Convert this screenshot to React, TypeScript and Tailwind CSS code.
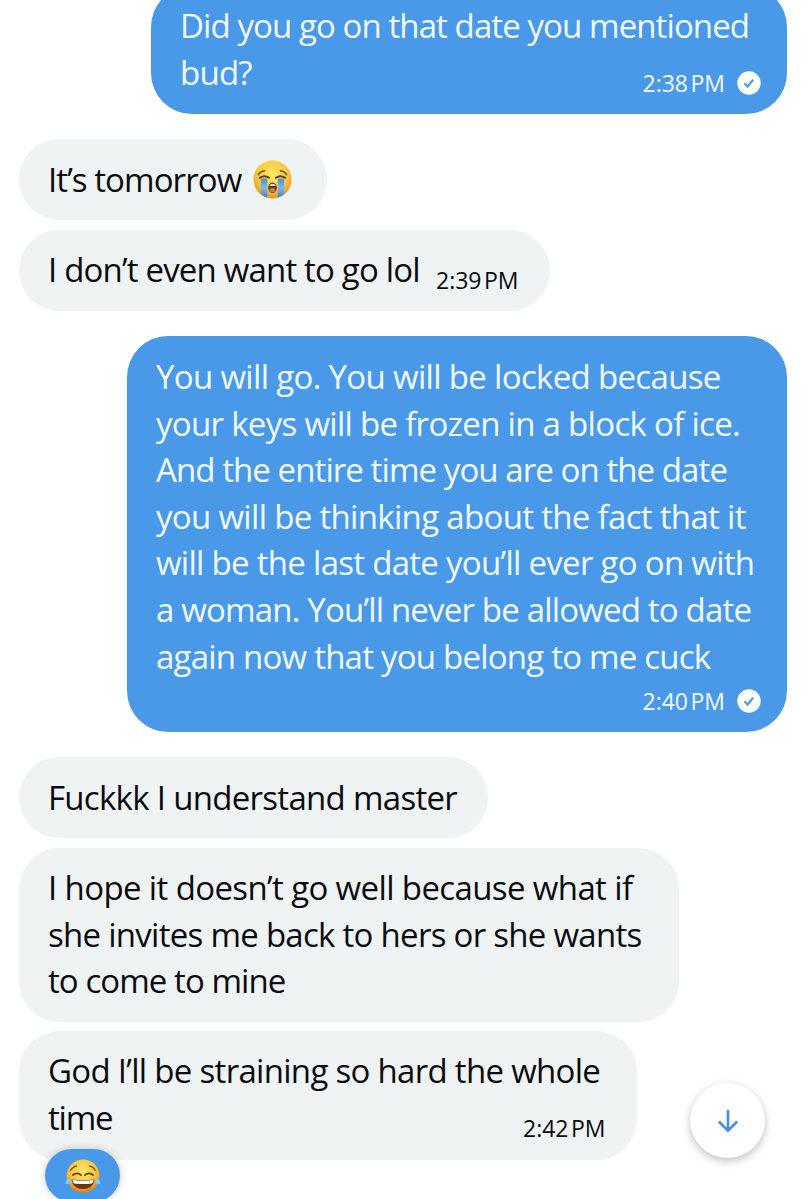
import clsx from "clsx";
import type { ReactNode } from "react";

type Line = { text: string; tracking?: string; after?: ReactNode };

function CryingEmoji() {
  return (
    <svg viewBox="0 0 40 40" className="h-[39px] w-[39px]">
      <defs>
        <radialGradient id="cry-face" cx="50%" cy="38%" r="65%">
          <stop offset="0" stopColor="#ffe96b" />
          <stop offset="0.6" stopColor="#fccb3c" />
          <stop offset="1" stopColor="#e08a1e" />
        </radialGradient>
        <linearGradient id="cry-tear" x1="0" y1="0" x2="0" y2="1">
          <stop offset="0" stopColor="#4f92d8" />
          <stop offset="0.5" stopColor="#7db8ea" />
          <stop offset="1" stopColor="#3a7fcc" />
        </linearGradient>
      </defs>
      <circle cx="20" cy="20" r="19.5" fill="url(#cry-face)" />
      <path d="M8 19h6.600v19.600q-3.800-1.200-6.600-3.800zM25.400 19h6.600v15.800q-2.800 2.600-6.600 3.800z" fill="url(#cry-tear)" />
      <path d="M5.500 15q2.500-3.500 6.500-4M34.500 15q-2.500-3.500-6.500-4" fill="none" stroke="#7b4a12" strokeWidth="1.500" strokeLinecap="round" />
      <path d="M7 18.200q5-3 9.500 0M23.500 18.200q4.500-3 9.500 0" fill="none" stroke="#5c3a12" strokeWidth="2" strokeLinecap="round" />
      <ellipse cx="20" cy="28.500" rx="4.500" ry="5.300" fill="#6b3a12" />
      <path d="M16.500 26.500q3.500-4.500 7 0z" fill="#fff" />
      <ellipse cx="20" cy="31" rx="3" ry="2.200" fill="#b98450" />
    </svg>
  );
}

function JoyEmoji() {
  return (
    <svg viewBox="0 0 36 34" className="h-[34px] w-[36px]">
      <defs>
        <radialGradient id="joy-face" cx="50%" cy="35%" r="65%">
          <stop offset="0" stopColor="#ffe96b" />
          <stop offset="0.6" stopColor="#fcc63a" />
          <stop offset="1" stopColor="#e0801a" />
        </radialGradient>
      </defs>
      <circle cx="18" cy="17" r="16.500" fill="url(#joy-face)" />
      <path d="M5.500 11.500q2.500-4 6-4.500M30.500 11.500q-2.500-4-6-4.500" fill="none" stroke="#8a5514" strokeWidth="1.300" strokeLinecap="round" />
      <path d="M8 16q4-3.200 8 0M20 16q4-3.200 8 0" fill="none" stroke="#5c3a12" strokeWidth="1.800" strokeLinecap="round" />
      <path d="M6.500 20.500q11.500 1.500 23 0q-1.500 9.500-11.500 9.500t-11.500-9.500z" fill="#6b3410" />
      <path d="M7.500 21q10.500 1.400 21 0q-.4 2.600-1.600 3.500q-8.900 1.200-17.800 0q-1.200-.9-1.600-3.500z" fill="#fff" />
      <path d="M5.800 18.500c1 4-1.200 6.800-3.600 6.600c-3-.3-2.200-3.600 3.600-6.600zM30.200 18.500c-1 4 1.200 6.800 3.600 6.600c3-.3 2.200-3.600-3.600-6.600z" fill="#7ecbf5" />
    </svg>
  );
}

function SentCheck() {
  return (
    <svg viewBox="0 0 24 24" className="h-6 w-6">
      <circle cx="12" cy="12" r="11.700" fill="#fff" />
      <path d="M7.400 12.300l3.200 3.200 5.600-6.900" fill="none" stroke="#4a99e9" strokeWidth="2.200" />
    </svg>
  );
}

function Time({ value, className }: { value: string; className?: string }) {
  return (
    <span className={clsx("text-[23px] leading-6 tracking-[-0.05px] whitespace-nowrap [word-spacing:-3.2px]", className)}>
      {value}
    </span>
  );
}

function Bubble({
  lines,
  sent,
  className,
  children,
}: {
  lines: Line[];
  sent?: boolean;
  className: string;
  children?: ReactNode;
}) {
  return (
    <div
      className={clsx(
        "flex shrink-0 flex-col rounded-[41px] pt-[17px] pl-[29px] text-[33px] leading-[46.6px]",
        sent ? "self-end bg-[#4a99e9] text-[#f0f9ff]" : "self-start bg-[#eff3f4] font-[430] text-[#0a0c10]",
        className
      )}
    >
      {lines.map((line) => (
        <div key={line.text} className={clsx("flex items-center whitespace-nowrap", line.tracking)}>
          {line.text}
          {line.after}
        </div>
      ))}
      {children}
    </div>
  );
}

export default function App() {
  return (
    <main className="relative flex h-[1199px] w-[806px] flex-col overflow-hidden bg-white px-[19px] font-['Open_Sans',sans-serif]">
      <Bubble
        sent
        className="-mt-[14px] h-[128px] w-[636px]"
        lines={[
          { text: "Did you go on that date you mentioned", tracking: "tracking-[-0.91px]" },
          { text: "bud?", tracking: "tracking-[-0.75px]" },
        ]}
      >
        <div className="-mt-[25px] mr-[26px] flex items-center gap-3 self-end">
          <Time value="2:38 PM" />
          <SentCheck />
        </div>
      </Bubble>

      <Bubble
        className="mt-[25px] h-[81px] w-[307.5px] pt-[18px]"
        lines={[
          {
            text: "It’s tomorrow",
            tracking: "tracking-[-0.92px]",
            after: <span className="-mt-0.5 ml-[12px]"><CryingEmoji /></span>,
          },
        ]}
      />
      <Bubble
        className="mt-[10px] h-[81px] w-[530.5px]"
        lines={[{ text: "I don’t even want to go lol", tracking: "tracking-[-0.82px]" }]}
      >
        <Time value="2:39 PM" className="-mt-[26px] mr-[31px] self-end" />
      </Bubble>

      <Bubble
        sent
        className="mt-[25px] h-[396px] w-[660px] pt-[18px]"
        lines={[
          { text: "You will go. You will be locked because", tracking: "tracking-[-0.67px]" },
          { text: "your keys will be frozen in a block of ice.", tracking: "tracking-[-0.7px]" },
          { text: "And the entire time you are on the date", tracking: "tracking-[-0.92px]" },
          { text: "you will be thinking about the fact that it", tracking: "tracking-[-0.68px]" },
          { text: "will be the last date you’ll ever go on with", tracking: "tracking-[-0.71px]" },
          { text: "a woman. You’ll never be allowed to date", tracking: "tracking-[-0.82px]" },
          { text: "again now that you belong to me cuck", tracking: "tracking-[-0.78px]" },
        ]}
      >
        <div className="mt-[9px] mr-[26px] flex items-center gap-3 self-end">
          <Time value="2:40 PM" />
          <SentCheck />
        </div>
      </Bubble>

      <Bubble
        className="mt-[25px] h-[81px] w-[468.5px] pt-[18px]"
        lines={[{ text: "Fuckkk I understand master", tracking: "tracking-[-0.7px]" }]}
      />
      <Bubble
        className="mt-[10px] h-[173.5px] w-[660px]"
        lines={[
          { text: "I hope it doesn’t go well because what if", tracking: "tracking-[-0.62px]" },
          { text: "she invites me back to hers or she wants", tracking: "tracking-[-0.72px]" },
          { text: "to come to mine", tracking: "tracking-[-0.93px]" },
        ]}
      />
      <Bubble
        className="mt-[9.5px] h-[128.5px] w-[617.5px]"
        lines={[
          { text: "God I’ll be straining so hard the whole", tracking: "tracking-[-0.7px]" },
          { text: "time", tracking: "tracking-[-1.2px]" },
        ]}
      >
        <Time value="2:42 PM" className="-mt-[25px] mr-[31px] self-end" />
      </Bubble>

      <div className="absolute top-[1149px] left-[45px] flex h-[53px] w-[75px] items-center justify-center rounded-full bg-[#4a99e9] shadow-[0_0_8px_rgba(0,0,0,0.2)]">
        <JoyEmoji />
      </div>
      <button className="absolute top-[1083px] left-[690px] flex h-[75px] w-[75px] items-center justify-center rounded-full bg-white shadow-[0_3px_8px_rgba(0,0,0,0.25)]">
        <svg viewBox="0 0 24 24" className="h-6 w-6" fill="none" stroke="#4a90d6" strokeWidth="2.600">
          <path d="M12 .8v21M2.800 12.500l9.200 9.200 9.200-9.200" />
        </svg>
      </button>
    </main>
  );
}
